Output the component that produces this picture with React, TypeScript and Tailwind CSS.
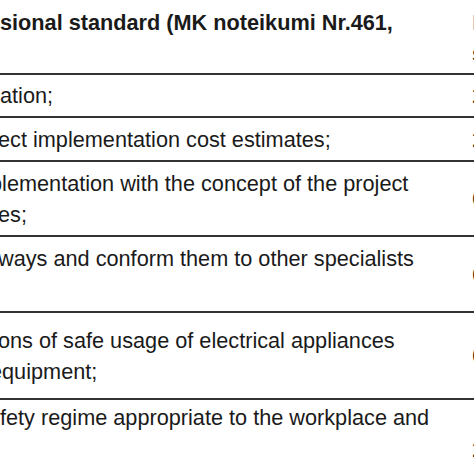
import React from 'react';

type Line = { text: string; shift: string };
type Row = {
  height: string;
  border: string;
  align: string;
  lines: Line[];
  side: string;
  sideAlign: string;
};

const rows: Row[] = [
  {
    height: 'h-[43px]',
    border: 'border-b-2',
    align: 'justify-center',
    lines: [{ text: 'ation;', shift: 'ml-0' }],
    side: '2',
    sideAlign: 'items-center',
  },
  {
    height: 'h-[44px]',
    border: 'border-b-2',
    align: 'justify-center',
    lines: [{ text: 'ect implementation cost estimates;', shift: '-ml-[2px]' }],
    side: '2',
    sideAlign: 'items-center',
  },
  {
    height: 'h-[75px]',
    border: 'border-b-2',
    align: 'justify-center',
    lines: [
      { text: 'plementation with the concept of the project', shift: '-ml-[10px]' },
      { text: 'es;', shift: '-ml-[2px]' },
    ],
    side: '6',
    sideAlign: 'items-center',
  },
  {
    height: 'h-[76px]',
    border: 'border-b-2',
    align: 'justify-center',
    lines: [
      { text: 'ways and conform them to other specialists', shift: '-ml-[2px]' },
      { text: '\u00a0', shift: 'ml-0' },
    ],
    side: '6',
    sideAlign: 'items-center',
  },
  {
    height: 'h-[87px]',
    border: 'border-b-2',
    align: 'justify-center',
    lines: [
      { text: 'ons of safe usage of electrical appliances', shift: '-ml-[2px]' },
      { text: 'equipment;', shift: '-ml-[10px]' },
    ],
    side: '6',
    sideAlign: 'items-center',
  },
  {
    height: 'h-[90px]',
    border: 'border-b-0',
    align: 'justify-start pt-[2px]',
    lines: [
      { text: 'fety regime appropriate to the workplace and', shift: 'ml-0' },
      { text: '\u00a0', shift: 'ml-0' },
    ],
    side: '2',
    sideAlign: 'items-start pt-[34px]',
  },
];

export default function App() {
  return (
    <div className="w-[474px] h-[474px] overflow-hidden bg-white text-[#1a1a1a] font-['Liberation_Sans',Arial,sans-serif] text-[21.7px] leading-[31px]">
      <div className="w-[560px]">
        <div className="flex h-[75px] border-b-2 border-[#333]">
          <div className="w-[472px] overflow-hidden pt-[7px] font-bold whitespace-nowrap">
            <div>sional standard (MK noteikumi Nr.461,</div>
            <div>&nbsp;</div>
          </div>
          <div className="flex-1 pt-[7px] font-bold text-[#aaa]">
            <div>I</div>
            <div className="text-[#1a1a1a]">s</div>
          </div>
        </div>
        {rows.map((row, i) => (
          <div key={i} className={`flex ${row.height} ${row.border} border-[#333]`}>
            <div className={`w-[472px] overflow-hidden flex flex-col ${row.align} whitespace-nowrap`}>
              {row.lines.map((line, j) => (
                <div key={j} className={line.shift}>
                  {line.text}
                </div>
              ))}
            </div>
            <div className={`flex-1 flex ${row.sideAlign}`}>
              <div>{row.side}</div>
            </div>
          </div>
        ))}
      </div>
    </div>
  );
}
